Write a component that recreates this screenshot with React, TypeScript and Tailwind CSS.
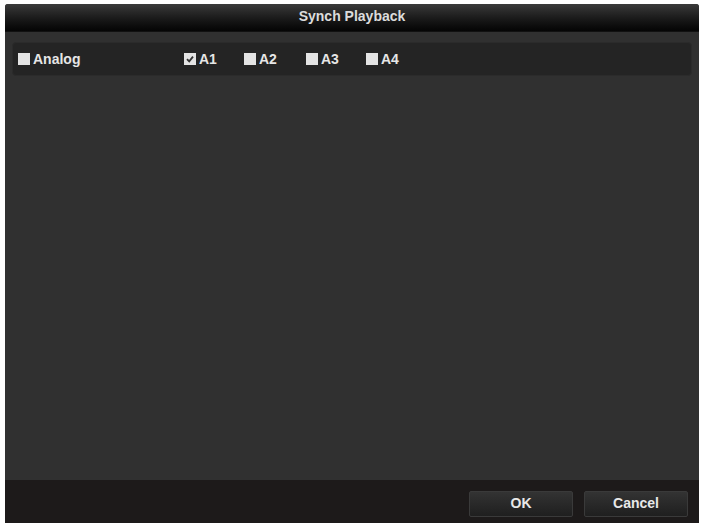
import React from "react";

function Box({ checked }: { checked?: boolean }) {
  return (
    <span className="w-[12px] h-[12px] bg-[#e4e4e4] flex items-center justify-center shrink-0">
      {checked && (
        <svg width="10" height="10" viewBox="0 0 10 10">
          <path d="M2 5.2 L4.2 7.4 L8 2.6" stroke="#333" strokeWidth="1.8" fill="none" />
        </svg>
      )}
    </span>
  );
}

function Item({ label, checked, w }: { label: string; checked?: boolean; w: string }) {
  return (
    <div className={`flex items-center gap-[3px] ${w}`}>
      <Box checked={checked} />
      <span className="text-[14px] font-bold text-[#e6e6e6]">{label}</span>
    </div>
  );
}

export default function App() {
  return (
    <div
      className="w-[701px] h-[523px] bg-white pl-[5px] pt-[4px] pr-[2px]"
      style={{ fontFamily: '"Liberation Sans", Arial, sans-serif' }}
    >
      <div className="w-full h-full flex flex-col bg-[#303030] rounded-tl-[3px] rounded-tr-[3px] overflow-hidden">
        <div className="h-[28px] flex items-center justify-center bg-gradient-to-b from-[#3a3a3a] via-[#1c1c1c] to-[#050505] border-b border-[#111]">
          <span className="text-[14px] font-bold text-[#dcdcdc] -mt-[2px]">Synch Playback</span>
        </div>
        <div className="flex-1 px-[7px] pt-[10px]">
          <div className="h-[34px] rounded-[4px] bg-[#242424] border border-[#2b2b2b] flex items-center pl-[5px]">
            <Item label="Analog" w="w-[166px]" />
            <Item label="A1" checked w="w-[60px]" />
            <Item label="A2" w="w-[62px]" />
            <Item label="A3" w="w-[60px]" />
            <Item label="A4" w="w-[60px]" />
          </div>
        </div>
        <div className="h-[43px] bg-[#1d1a1a] flex items-center justify-end pr-[11px] gap-[11px]">
          <button className="w-[104px] h-[26px] rounded-[2px] bg-gradient-to-b from-[#333] to-[#1f1f1f] border border-[#3a3a3a] text-[14px] font-bold text-[#e8e8e8] mt-[4px]">
            OK
          </button>
          <button className="w-[104px] h-[26px] rounded-[2px] bg-gradient-to-b from-[#333] to-[#1f1f1f] border border-[#3a3a3a] text-[14px] font-bold text-[#e8e8e8] mt-[4px]">
            Cancel
          </button>
        </div>
      </div>
    </div>
  );
}
